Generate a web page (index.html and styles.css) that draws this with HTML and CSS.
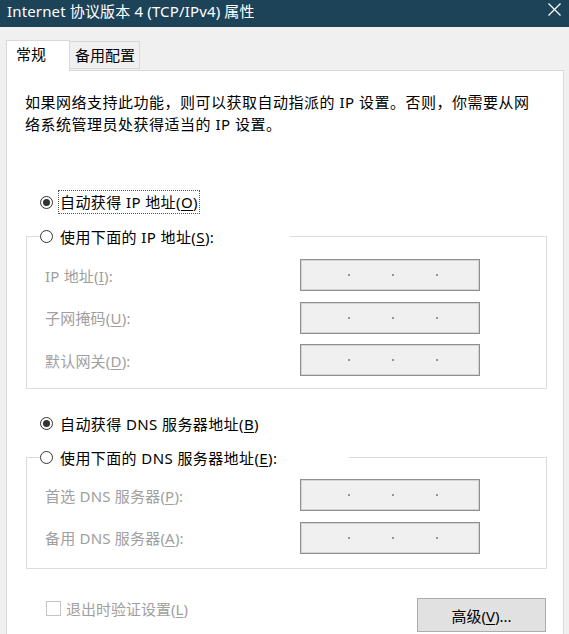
FILE: index.html
```html
<!DOCTYPE html>
<html lang="zh-CN">
<head>
    <meta charset="UTF-8">
    <meta name="viewport" content="width=device-width, initial-scale=1.0">
    <title>Internet 协议版本 4 (TCP/IPv4) 属性</title>
    <link rel="stylesheet" href="styles.css">
</head>
<body>
    <div class="window">
        <!-- Barra de título -->
        <div class="titlebar">
            <span class="title">Internet 协议版本 4 (TCP/IPv4) 属性</span>
            <svg class="close" width="13" height="13" viewBox="0 0 13 13">
                <path d="M0.5 0.5 L12.5 12.5 M12.5 0.5 L0.5 12.5" stroke="#fff" stroke-width="1.2" fill="none"/>
            </svg>
        </div>

        <div class="dialog">
            <!-- Pestañas -->
            <div class="tabs">
                <div class="tab active">常规</div>
                <div class="tab">备用配置</div>
            </div>

            <div class="panel">
                <p class="intro">如果网络支持此功能，则可以获取自动指派的 IP 设置。否则，你需要从网<br>络系统管理员处获得适当的 IP 设置。</p>

                <label class="radio-row first">
                    <span class="radio checked"></span>
                    <span class="focus">自动获得 IP 地址(<u>O</u>)</span>
                </label>

                <fieldset class="group group-ip">
                    <legend>
                        <label class="radio-row">
                            <span class="radio"></span>
                            <span class="radio-text">使用下面的 IP 地址(<u>S</u>):</span>
                        </label>
                    </legend>
                    <div class="fields">
                        <span class="field-label">IP 地址(<u>I</u>):</span>
                        <div class="ip-box"><span class="dot"></span><span class="dot"></span><span class="dot"></span></div>
                        <span class="field-label">子网掩码(<u>U</u>):</span>
                        <div class="ip-box"><span class="dot"></span><span class="dot"></span><span class="dot"></span></div>
                        <span class="field-label">默认网关(<u>D</u>):</span>
                        <div class="ip-box"><span class="dot"></span><span class="dot"></span><span class="dot"></span></div>
                    </div>
                </fieldset>

                <label class="radio-row dns-auto">
                    <span class="radio checked"></span>
                    <span class="radio-text">自动获得 DNS 服务器地址(<u>B</u>)</span>
                </label>

                <fieldset class="group group-dns">
                    <legend>
                        <label class="radio-row">
                            <span class="radio"></span>
                            <span class="radio-text">使用下面的 DNS 服务器地址(<u>E</u>):</span>
                        </label>
                    </legend>
                    <div class="fields">
                        <span class="field-label">首选 DNS 服务器(<u>P</u>):</span>
                        <div class="ip-box"><span class="dot"></span><span class="dot"></span><span class="dot"></span></div>
                        <span class="field-label">备用 DNS 服务器(<u>A</u>):</span>
                        <div class="ip-box"><span class="dot"></span><span class="dot"></span><span class="dot"></span></div>
                    </div>
                </fieldset>

                <!-- Pie: casilla y botón -->
                <div class="footer">
                    <label class="check">
                        <span class="box"></span>
                        <span>退出时验证设置(<u>L</u>)</span>
                    </label>
                    <button class="advanced">高级(<u>V</u>)...</button>
                </div>
            </div>
        </div>
    </div>
</body>
</html>
```

FILE: styles.css
```css
/* Ventana de propiedades TCP/IPv4 */
html, body {
    margin: 0;
    padding: 0;
}

body {
    width: 569px;
    height: 634px;
    overflow: hidden;
    background-color: #f0f0f0;
    font-family: 'Noto Sans', 'Noto Sans CJK SC', sans-serif;
    font-size: 15px;
    color: #000;
}

.titlebar {
    display: flex;
    justify-content: space-between;
    align-items: flex-start;
    height: 27px;
    padding: 0 8px 0 7px;
    background-color: #1d4359;
    color: #fff;
}

.title {
    line-height: 23px;
    font-size: 15px;
    letter-spacing: 0.15px;
}

.close {
    margin-top: 3px;
}

.dialog {
    padding-top: 13px;
}

.tabs {
    display: flex;
    align-items: flex-end;
    margin-left: 6px;
    position: relative;
    z-index: 1;
}

.tab {
    box-sizing: border-box;
    height: 28px;
    width: 70px;
    padding-left: 5px;
    border: 1px solid #d9d9d9;
    border-left: none;
    background-color: #f0f0f0;
    line-height: 26px;
    margin-bottom: 1px;
}

.tab.active {
    height: 31px;
    width: 64px;
    padding-left: 9px;
    border-left: 1px solid #d9d9d9;
    border-bottom: none;
    background-color: #fff;
    line-height: 26px;
    margin-bottom: -1px;
}

.panel {
    box-sizing: border-box;
    width: 558px;
    height: 620px;
    margin-left: 6px;
    padding: 20px 18px 0 18px;
    border: 1px solid #d9d9d9;
    background-color: #fff;
}

.intro {
    margin: 0;
    line-height: 22px;
    letter-spacing: 0.5px;
}

.radio-row {
    display: flex;
    align-items: center;
    height: 24px;
    letter-spacing: 0.4px;
}

.radio-row.first {
    margin-top: 55px;
    margin-left: 15px;
}

.radio-row.dns-auto {
    margin-top: 22px;
    margin-left: 15px;
}

.radio {
    box-sizing: border-box;
    width: 13px;
    height: 13px;
    border: 1px solid #333;
    border-radius: 50%;
    display: flex;
    justify-content: center;
    align-items: center;
    flex-shrink: 0;
}

.radio.checked::after {
    content: "";
    width: 7px;
    height: 7px;
    border-radius: 50%;
    background-color: #333;
}

.focus {
    margin-left: 5px;
    padding: 0 1px;
    line-height: 22px;
    border: 1px dotted #555;
}

.radio-text {
    margin-left: 7px;
}

u {
    text-decoration: underline;
    text-underline-offset: 2px;
}

.group {
    box-sizing: border-box;
    width: 521px;
    margin: 10.5px 0 0 1px;
    padding: 0 0 12px 18px;
    border: 1px solid #dcdcdc;
}

.group legend {
    padding: 0 76px 0 0;
    margin-left: -5px;
}

.group-dns legend {
    padding-right: 72px;
}

.group-dns {
    padding-bottom: 14.5px;
}

.fields {
    display: grid;
    grid-template-columns: 255px 180px;
    grid-auto-rows: 32px;
    row-gap: 10.5px;
    align-items: center;
    margin-top: 10.5px;
}

.group-dns .fields {
    margin-top: 9.5px;
}

.field-label {
    color: #a0a0a0;
    letter-spacing: 0.2px;
}

.ip-box {
    box-sizing: border-box;
    height: 32px;
    display: flex;
    align-items: center;
    gap: 42px;
    padding-left: 47px;
    border: 1px solid #8f8f8f;
    box-shadow: inset 0 0 0 1px #d4d4d4;
    background-color: #f0f0f0;
}

.dot {
    width: 2px;
    height: 2px;
    background-color: #8a97a8;
}

.footer {
    display: flex;
    justify-content: space-between;
    align-items: flex-start;
    margin-top: 27px;
    margin-right: -1px;
}

.check {
    display: flex;
    align-items: center;
    height: 24px;
    margin-left: 21px;
    color: #a0a0a0;
}

.check .box {
    box-sizing: border-box;
    width: 15px;
    height: 15px;
    margin-right: 5px;
    border: 1px solid #c4c4c4;
    background-color: #fff;
}

.advanced {
    box-sizing: border-box;
    width: 129px;
    height: 34px;
    margin-top: 2px;
    border: 1px solid #adadad;
    border-radius: 0;
    background-color: #e1e1e1;
    font-family: inherit;
    font-size: 15px;
    color: #000;
    padding: 0;
}
```
